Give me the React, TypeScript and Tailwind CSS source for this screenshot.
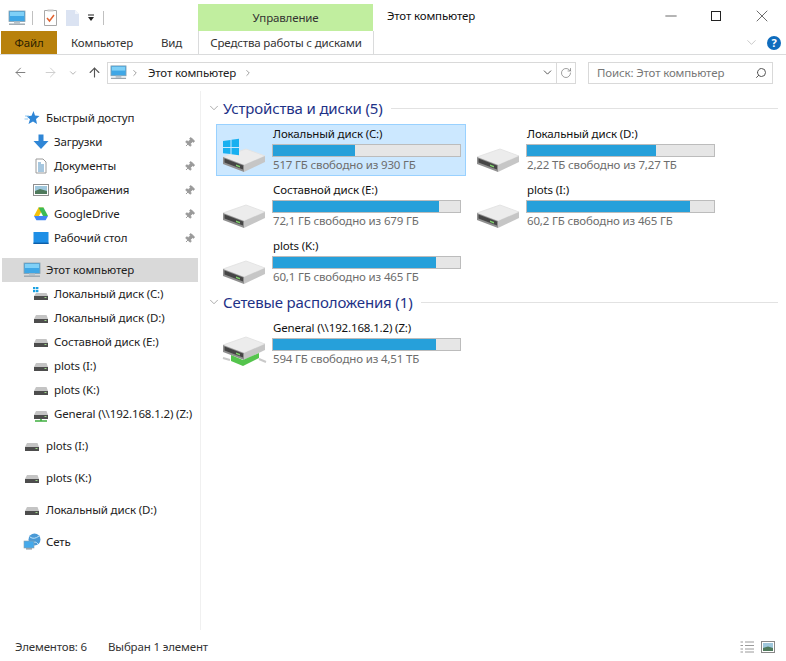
import { ChevronDown, ChevronRight, ArrowLeft, ArrowRight, ArrowUp, RotateCw, Search, Minus, X, Pin } from 'lucide-react'

function Pc({ size = 18 }: { size?: number }) {
  return (
    <svg width={size} height={size} viewBox="0 0 18 18" className="shrink-0">
      <rect x="1" y="2" width="16" height="10.5" fill="#3fa7e6" stroke="#8aa0ad" strokeWidth="0.8" />
      <rect x="2" y="3" width="14" height="4" fill="#7fd0f7" />
      <rect x="6" y="12.5" width="6" height="2" fill="#b8c4cc" />
      <rect x="1" y="14.5" width="16" height="1.4" fill="#9aa5ad" />
    </svg>
  )
}

function DriveSmall({ net, win }: { net?: boolean; win?: boolean }) {
  return (
    <svg width="16" height="16" viewBox="0 0 16 16" className="shrink-0">
      {win && (
        <g fill="#1ba1e2">
          <rect x="0" y="1" width="2.4" height="2.2" />
          <rect x="3" y="1" width="2.4" height="2.2" />
          <rect x="0" y="4" width="2.4" height="2.2" />
          <rect x="3" y="4" width="2.4" height="2.2" />
        </g>
      )}
      <path d={win ? 'M3 7 L13.5 7 L15 10 L1 10 Z' : 'M3 5 L13.5 5 L15 9 L1 9 Z'} fill="#c4c4c4" />
      <rect x="1" y={win ? 10 : 9} width="14" height="4" fill="#4d4d4d" />
      <rect x="11.5" y={win ? 11 : 10} width="2" height="1" fill="#9fd68a" />
      {net && <path d="M8 13 V15 M2 15 H14" stroke="#3fae3f" strokeWidth="1.6" />}
    </svg>
  )
}

function DriveLarge({ win, net }: { win?: boolean; net?: boolean }) {
  return (
    <svg width="46" height="44" viewBox="0 0 46 44" className="shrink-0">
      <g transform={net ? 'translate(0 -6)' : undefined}>
        <path d="M2 28 L25 20 L44 27 L23 36 Z" fill="#ececec" stroke="#e4e4e4" strokeLinejoin="round" />
        <path d="M23 36 L44 27 L44 33 L23 43 Z" fill="#c6c6c6" />
        <path d="M2 28 L23 36 L23 43 L2 35 Z" fill="#8f8f8f" />
        <path d="M3.5 29.5 L22 36.5 L22 40.5 L3.5 33.5 Z" fill="#454545" />
        <path d="M15 35.5 L19 37 L19 38.6 L15 37.1 Z" fill="#7fd36b" />
      </g>
      {win && (
        <g fill="#19b0f0">
          <path d="M2 12 L9.5 11 L9.5 18 L2 18 Z" />
          <path d="M10.5 10.8 L18 9.8 L18 18 L10.5 18 Z" />
          <path d="M2 19 L9.5 19 L9.5 25 L2 24.2 Z" />
          <path d="M10.5 19 L18 19 L18 26.2 L10.5 25.2 Z" />
        </g>
      )}
      {net && (
        <g>
          <path d="M10 32 L22 37 L38 30 L38 35 L22 43 L10 38 Z" fill="#54c44c" />
          <path d="M2 35 L9 37 M38 36 L45 39" stroke="#c9c9c9" strokeWidth="2" />
        </g>
      )}
    </svg>
  )
}

function Star() {
  return (
    <svg width="16" height="16" viewBox="0 0 16 16" className="shrink-0">
      <path d="M9.5 1 L11 5.6 L15.5 6 L12 9 L13 14 L9 11.5 L4.5 14 L6 9.2 L2.5 6.2 L7.5 5.8 Z" fill="#2f86d6" />
      <path d="M1 6 H5 M0.5 9 H4" stroke="#8fc6ee" />
    </svg>
  )
}

function DownArrow() {
  return (
    <svg width="16" height="16" viewBox="0 0 16 16" className="shrink-0">
      <path d="M5.5 0.5 H10.5 V7 H15.5 L8 15 L0.5 7 H5.5 Z" fill="#2f86d6" />
    </svg>
  )
}

function Doc() {
  return (
    <svg width="16" height="16" viewBox="0 0 16 16" className="shrink-0">
      <path d="M3 1 H10 L13 4 V15 H3 Z" fill="#fff" stroke="#9a9a9a" />
      <path d="M5 5 H8 M5 7 H11 M5 9 H11 M5 11 H11 M5 13 H11" stroke="#4f8fbf" />
    </svg>
  )
}

function Pics() {
  return (
    <svg width="16" height="16" viewBox="0 0 16 16" className="shrink-0">
      <rect x="0.5" y="2.5" width="15" height="11" fill="#fff" stroke="#8f8f8f" />
      <rect x="2" y="4" width="12" height="8" fill="#9fc7dc" />
      <path d="M2 9 L7 7 L14 9 V12 H2 Z" fill="#4f7a5c" />
    </svg>
  )
}

function Gdrive() {
  return (
    <svg width="16" height="16" viewBox="0 0 16 16" className="shrink-0">
      <path d="M5.5 1.5 H10.5 L6 10 H1 Z" fill="#f4c20d" />
      <path d="M5.5 1.5 H10.5 L15 10 H10 Z" fill="#3cba54" />
      <path d="M1 10 H15 L12.6 14.2 H3.4 Z" fill="#4285f4" />
    </svg>
  )
}

function Desktop() {
  return (
    <svg width="16" height="16" viewBox="0 0 16 16" className="shrink-0">
      <rect x="0.5" y="2" width="15" height="12" fill="#1e8fe6" />
      <rect x="0.5" y="12.6" width="15" height="1.4" fill="#0d5ea8" />
    </svg>
  )
}

function Network() {
  return (
    <svg width="18" height="18" viewBox="0 0 18 18" className="shrink-0">
      <circle cx="11.5" cy="6.5" r="6" fill="#4a9ad6" />
      <path d="M7 4 Q11 7 16 3 M9 11 Q12 7 15 11" stroke="#bfe3f7" fill="none" />
      <rect x="1" y="8" width="10" height="7" fill="#45a9ea" stroke="#8aa0ad" strokeWidth="0.6" />
      <rect x="3" y="15" width="6" height="1.6" fill="#9aa5ad" />
    </svg>
  )
}

function Help() {
  return (
    <div className="flex h-[14px] w-[14px] items-center justify-center rounded-full bg-[#0f6cbd] text-[11px] font-bold leading-none text-white">?</div>
  )
}

function NavRow({ icon, label, level = 2, pinned = false, selected = false }: { icon: React.ReactNode; label: string; level?: 1 | 2; pinned?: boolean; selected?: boolean }) {
  return (
    <div className={`ml-[2px] flex h-[24px] w-[196px] items-center ${selected ? 'bg-[#d9d9d9]' : ''}`}>
      <div className={`flex w-[18px] justify-center ${level === 1 ? 'ml-[21px] mr-[5px]' : 'ml-[30px] mr-[4px]'}`}>{icon}</div>
      <span className="flex-1 whitespace-nowrap text-[#222]">{label}</span>
      {pinned && <Pin size={11} className="mr-[3px] rotate-45 fill-[#9a9a9a] text-[#9a9a9a]" />}
    </div>
  )
}

function Tile({ name, info, pct, selected, win, net }: { name: string; info: string; pct: number; selected?: boolean; win?: boolean; net?: boolean }) {
  return (
    <div className={`flex h-[52px] items-center border pl-[4px] ${selected ? 'border-[#99d1ff] bg-[#cce8ff]' : 'border-transparent'}`}>
      <div className="w-[51px] pt-[2px]">
        <DriveLarge win={win} net={net} />
      </div>
      <div className="flex w-[190px] flex-col">
        <div className="h-[17px] pl-[1px] leading-[14px] text-[#111]">{name}</div>
        <div className="h-[13px] w-[189px] border border-[#bcbcbc] bg-[#e6e6e6]">
          <div className="h-full bg-[#26a0da]" style={{ width: `${pct}%` }} />
        </div>
        <div className="h-[17px] pl-[1px] leading-[16px] text-[#6d6d6d]">{info}</div>
      </div>
    </div>
  )
}

function Group({ title, children }: { title: string; children: React.ReactNode }) {
  return (
    <div>
      <div className="flex h-[20px] items-center">
        <ChevronDown size={14} strokeWidth={1.2} className="text-[#8a8a8a]" />
        <span className="ml-[2px] whitespace-nowrap text-[15px] text-[#1e3287]">{title}</span>
        <div className="ml-[8px] h-px flex-1 bg-[#e2e2e2]" />
      </div>
      <div className="mt-[6px] ml-[9px] grid grid-cols-[250px_250px] gap-[4px]">{children}</div>
    </div>
  )
}

export default function App() {
  return (
    <div className="flex h-[661px] w-[786px] flex-col overflow-hidden bg-white text-[11.5px] font-['Noto_Sans',sans-serif] tracking-[-0.15px]">
      {/* title */}
      <div className="flex h-[31px] shrink-0">
        <div className="flex w-[198px] items-center pl-[8px] pt-[4px]">
          <Pc />
          <div className="ml-[6px] h-[14px] w-px bg-[#c0c0c0]" />
          <svg width="13" height="17" viewBox="0 0 13 17" className="ml-[11px] shrink-0">
            <path d="M0.5 1.5 H12.5 V16.5 H0.5 Z" fill="#fff" stroke="#a8a8a8" />
            <path d="M3.5 0.5 H9.5 V2.5 H3.5 Z" fill="#c9c9c9" />
            <path d="M3 9 L5.5 12 L10 6" stroke="#e2622f" strokeWidth="1.5" fill="none" />
          </svg>
          <svg width="13" height="16" viewBox="0 0 13 16" className="ml-[9px] shrink-0">
            <path d="M0 0 H9 L13 4 V16 H0 Z" fill="#dbe3f2" />
            <path d="M9 0 L13 4 H9 Z" fill="#f2f5fb" />
          </svg>
          <svg width="8" height="8" viewBox="0 0 8 8" className="ml-[8px] shrink-0">
            <path d="M1 1 H7" stroke="#222" />
            <path d="M1 3 H7 L4 7 Z" fill="#222" />
          </svg>
          <div className="ml-[8px] h-[14px] w-px bg-[#c0c0c0]" />
        </div>
        <div className="mt-[4px] flex w-[175px] items-center justify-center bg-[#c1ee9f] text-[#333]">Управление</div>
        <div className="ml-[14px] flex items-center pt-[1px] text-[#111]">Этот компьютер</div>
        <div className="ml-auto flex items-center pr-[14px] text-[#222]">
          <Minus size={18} strokeWidth={0.9} />
          <div className="ml-[31px] h-[10px] w-[10px] border border-[#222]" />
          <X size={20} strokeWidth={0.8} className="ml-[31px]" />
        </div>
      </div>
      {/* tabs */}
      <div className="flex h-[24px] shrink-0 items-stretch border-b border-[#dadbdc] text-[#333]">
        <div className="ml-[1px] flex w-[56px] items-center justify-center bg-[#b8810c] text-[#2d2200]">Файл</div>
        <div className="ml-[14px] flex w-[62px] items-center whitespace-nowrap">Компьютер</div>
        <div className="ml-[28px] flex w-[20px] items-center">Вид</div>
        <div className="ml-[17px] flex w-[176px] items-center justify-center border-x border-[#dadbdc]">Средства работы с дисками</div>
        <div className="ml-auto flex items-center pr-[5px]">
          <ChevronDown size={15} strokeWidth={1} className="mr-[8px] text-[#aaa]" />
          <Help />
        </div>
      </div>
      {/* address */}
      <div className="flex h-[36px] shrink-0 items-center pb-[1px] text-[#222]">
        <ArrowLeft size={15} strokeWidth={1.5} className="ml-[13px] text-[#777]" />
        <ArrowRight size={15} strokeWidth={1.5} className="ml-[15px] text-[#ccc]" />
        <ChevronDown size={10} strokeWidth={1.5} className="ml-[10px] text-[#888]" />
        <ArrowUp size={15} strokeWidth={1.8} className="ml-[9px] text-[#555]" />
        <div className="ml-[5px] flex h-[22px] w-[469px] items-center border border-[#d9d9d9] pl-[2px]">
          <Pc size={17} />
          <ChevronRight size={10} strokeWidth={1.5} className="ml-[3px] text-[#666]" />
          <span className="ml-[8px]">Этот компьютер</span>
          <ChevronRight size={10} strokeWidth={1.5} className="ml-[7px] text-[#666]" />
          <ChevronDown size={13} strokeWidth={1.8} className="ml-auto mr-[2px] text-[#555]" />
          <div className="h-full w-px bg-[#d9d9d9]" />
          <RotateCw size={12} strokeWidth={1.4} className="mx-[3px] text-[#777]" />
        </div>
        <div className="ml-[12px] flex h-[22px] w-[185px] items-center border border-[#d9d9d9] pl-[8px] pr-[5px] text-[#777]">
          <span>Поиск: Этот компьютер</span>
          <Search size={12} strokeWidth={2} className="ml-auto -scale-x-100 text-[#555]" />
        </div>
      </div>
      {/* body */}
      <div className="flex min-h-0 flex-1">
        <div className="w-[201px] shrink-0 border-r border-[#f0f0f0] pt-[15px]">
          <NavRow level={1} icon={<Star />} label="Быстрый доступ" />
          <NavRow icon={<DownArrow />} label="Загрузки" pinned />
          <NavRow icon={<Doc />} label="Документы" pinned />
          <NavRow icon={<Pics />} label="Изображения" pinned />
          <NavRow icon={<Gdrive />} label="GoogleDrive" pinned />
          <NavRow icon={<Desktop />} label="Рабочий стол" pinned />
          <div className="mt-[8px]">
            <NavRow level={1} icon={<Pc />} label="Этот компьютер" selected />
            <NavRow icon={<DriveSmall win />} label="Локальный диск (C:)" />
            <NavRow icon={<DriveSmall />} label="Локальный диск (D:)" />
            <NavRow icon={<DriveSmall />} label="Составной диск (E:)" />
            <NavRow icon={<DriveSmall />} label="plots (I:)" />
            <NavRow icon={<DriveSmall />} label="plots (K:)" />
            <NavRow icon={<DriveSmall net />} label="General (\\192.168.1.2) (Z:)" />
          </div>
          <div className="mt-[8px]"><NavRow level={1} icon={<DriveSmall />} label="plots (I:)" /></div>
          <div className="mt-[8px]"><NavRow level={1} icon={<DriveSmall />} label="plots (K:)" /></div>
          <div className="mt-[8px]"><NavRow level={1} icon={<DriveSmall />} label="Локальный диск (D:)" /></div>
          <div className="mt-[8px]"><NavRow level={1} icon={<Network />} label="Сеть" /></div>
        </div>
        <div className="flex-1 pl-[6px] pr-[8px] pt-[7px]">
          <Group title="Устройства и диски (5)">
            <Tile selected win name="Локальный диск (C:)" info="517 ГБ свободно из 930 ГБ" pct={44} />
            <Tile name="Локальный диск (D:)" info="2,22 ТБ свободно из 7,27 ТБ" pct={69} />
            <Tile name="Составной диск (E:)" info="72,1 ГБ свободно из 679 ГБ" pct={89} />
            <Tile name="plots (I:)" info="60,2 ГБ свободно из 465 ГБ" pct={87} />
            <Tile name="plots (K:)" info="60,1 ГБ свободно из 465 ГБ" pct={87} />
          </Group>
          <div className="mt-[4px]">
            <Group title="Сетевые расположения (1)">
              <Tile net name="General (\\192.168.1.2) (Z:)" info="594 ГБ свободно из 4,51 ТБ" pct={87} />
            </Group>
          </div>
        </div>
      </div>
      {/* status */}
      <div className="flex h-[31px] shrink-0 items-center pt-[3px] text-[#333]">
        <span className="ml-[15px] w-[93px]">Элементов: 6</span>
        <span>Выбран 1 элемент</span>
        <div className="ml-auto flex items-center gap-[7px] pr-[11px]">
          <svg width="14" height="12" viewBox="0 0 14 12">
            <path d="M0.5 1 H3 M0.5 4.5 H3 M0.5 8 H3 M0.5 11 H3 M5 1 H14 M5 4.5 H14 M5 8 H14 M5 11 H14" stroke="#9a9a9a" />
          </svg>
          <svg width="14" height="12" viewBox="0 0 14 12">
            <rect x="0.5" y="0.5" width="13" height="11" fill="#fff" stroke="#888" />
            <rect x="2" y="2" width="10" height="8" fill="#9fc7dc" />
            <path d="M2 7 L7 5.5 L12 7 V10 H2 Z" fill="#4f7a5c" />
          </svg>
        </div>
      </div>
    </div>
  )
}
